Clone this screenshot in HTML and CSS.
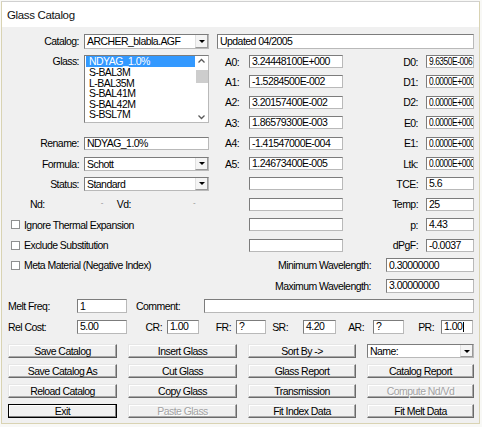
FILE: index.html
```html
<!DOCTYPE html>
<html>
<head>
<meta charset="utf-8">
<title>Glass Catalog</title>
<link rel="stylesheet" href="styles.css">
</head>
<body>
<div class="window">
  <div class="titlebar">Glass Catalog</div>
  <div class="content">
    <div class="main">
      <div class="left">
        <div class="lbl">Catalog:</div>
        <div class="combo tall"><span class="val">ARCHER_blabla.AGF</span><span class="drop"><span class="tri"></span></span></div>

        <div class="lbl glasslbl">Glass:</div>
        <div class="listbox">
          <div class="items">
            <div class="item sel">NDYAG_1.0%</div>
            <div class="item">S-BAL3M</div>
            <div class="item">L-BAL35M</div>
            <div class="item">S-BAL41M</div>
            <div class="item">S-BAL42M</div>
            <div class="item">S-BSL7M</div>
          </div>
          <div class="sb">
            <svg class="arr" width="13" height="10" viewBox="0 0 13 10"><polyline points="3.5,6.5 6.5,3.5 9.5,6.5" fill="none" stroke="#5a5a5a" stroke-width="1.3"/></svg>
            <div class="thumb"></div>
            <div class="track"></div>
            <svg class="arr" width="13" height="10" viewBox="0 0 13 10"><polyline points="3.5,3.5 6.5,6.5 9.5,3.5" fill="none" stroke="#5a5a5a" stroke-width="1.3"/></svg>
          </div>
        </div>

        <div class="lbl">Rename:</div>
        <div class="tb">NDYAG_1.0%</div>

        <div class="lbl">Formula:</div>
        <div class="combo"><span class="val">Schott</span><span class="drop"><span class="tri"></span></span></div>

        <div class="lbl">Status:</div>
        <div class="combo"><span class="val">Standard</span><span class="drop"><span class="tri"></span></span></div>

        <div class="ndrow"><span class="nd1">Nd:</span><span class="dash">-</span><span class="vd1">Vd:</span><span class="dash">-</span></div>

        <div class="cbrow"><span class="cb"></span>Ignore Thermal Expansion</div>
        <div class="cbrow"><span class="cb"></span>Exclude Substitution</div>
        <div class="cbrow"><span class="cb"></span>Meta Material (Negative Index)</div>
      </div>

      <div class="right">
        <div class="tb updated">Updated 04/2005</div>

        <div class="albl">A0:</div><div class="tb">3.24448100E+000</div><div class="dlbl">D0:</div><div class="tb"><span class="sq">9.6350E-006</span></div>
        <div class="albl">A1:</div><div class="tb">-1.5284500E-002</div><div class="dlbl">D1:</div><div class="tb"><span class="sq">0.0000E+000</span></div>
        <div class="albl">A2:</div><div class="tb">3.20157400E-002</div><div class="dlbl">D2:</div><div class="tb"><span class="sq">0.0000E+000</span></div>
        <div class="albl">A3:</div><div class="tb">1.86579300E-003</div><div class="dlbl">E0:</div><div class="tb"><span class="sq">0.0000E+000</span></div>
        <div class="albl">A4:</div><div class="tb">-1.41547000E-004</div><div class="dlbl">E1:</div><div class="tb"><span class="sq">0.0000E+000</span></div>
        <div class="albl">A5:</div><div class="tb">1.24673400E-005</div><div class="dlbl">Ltk:</div><div class="tb"><span class="sq">0.0000E+000</span></div>
        <div></div><div class="tb"></div><div class="dlbl">TCE:</div><div class="tb">5.6</div>
        <div></div><div class="tb"></div><div class="dlbl">Temp:</div><div class="tb">25</div>
        <div></div><div class="tb"></div><div class="dlbl">p:</div><div class="tb">4.43</div>
        <div></div><div class="tb"></div><div class="dlbl">dPgF:</div><div class="tb">-0.0037</div>

        <div class="wrow"><span class="wlbl">Minimum Wavelength:</span><div class="tb wbox">0.30000000</div></div>
        <div class="wrow"><span class="wlbl">Maximum Wavelength:</span><div class="tb wbox">3.00000000</div></div>
      </div>
    </div>

    <div class="frow">
      <span class="flbl">Melt Freq:</span><div class="tb fbox">1</div>
      <span class="comlbl">Comment:</span><div class="tb combox"></div>
    </div>
    <div class="frow">
      <span class="flbl">Rel Cost:</span><div class="tb fbox">5.00</div>
      <span class="rl rl-cr">CR:</span><div class="tb rb rb-cr">1.00</div>
      <span class="rl rl-fr">FR:</span><div class="tb rb rb-fr">?</div>
      <span class="rl rl-sr">SR:</span><div class="tb rb rb-sr">4.20</div>
      <span class="rl rl-ar">AR:</span><div class="tb rb rb-ar">?</div>
      <span class="rl rl-pr">PR:</span><div class="tb rb rb-pr">1.00<span class="caret"></span></div>
    </div>

    <div class="buttons">
      <div class="btn">Save Catalog</div>
      <div class="btn">Insert Glass</div>
      <div class="btn">Sort By -&gt;</div>
      <div class="combo bcombo"><span class="val">Name:</span><span class="drop"><span class="tri"></span></span></div>

      <div class="btn">Save Catalog As</div>
      <div class="btn">Cut Glass</div>
      <div class="btn">Glass Report</div>
      <div class="btn">Catalog Report</div>

      <div class="btn">Reload Catalog</div>
      <div class="btn">Copy Glass</div>
      <div class="btn">Transmission</div>
      <div class="btn disabled">Compute Nd/Vd</div>

      <div class="btn default">Exit</div>
      <div class="btn disabled">Paste Glass</div>
      <div class="btn">Fit Index Data</div>
      <div class="btn">Fit Melt Data</div>
    </div>
  </div>
</div>
</body>
</html>
```

FILE: styles.css
```css
* { box-sizing: border-box; }
html, body { margin: 0; padding: 0; }
body {
  width: 482px;
  height: 427px;
  overflow: hidden;
  background: #f8f8f6;
  font-family: "Liberation Sans", Arial, sans-serif;
  font-size: 10.5px;
  letter-spacing: -0.55px;
  color: #000;
}
.window {
  margin: 1px 0 0 1px;
  width: 479px;
  height: 423px;
  border: 1px solid #d9d3b3;
  border-top-color: #d0d0d0;
  background: #f0f0f0;
  display: flex;
  flex-direction: column;
}
.titlebar {
  height: 25px;
  background: #fff;
  padding-left: 5px;
  display: flex;
  align-items: center;
  font-size: 11.5px;
  letter-spacing: -0.35px;
  color: #111;
}
.content { flex: 1; padding: 4px 0 0 6px; }
.main { display: flex; }
.left {
  display: grid;
  grid-template-columns: 76px 125px;
  grid-auto-rows: 20.4px;
  align-items: center;
}
.right {
  display: grid;
  grid-template-columns: 40px 94px 83px 48px;
  grid-auto-rows: 20.4px;
  align-items: center;
}
.lbl { text-align: right; padding-right: 5px; white-space: nowrap; }
.glasslbl { grid-row: span 4; align-self: start; line-height: 20.4px; }
.albl { padding-left: 16px; }
.dlbl { text-align: right; padding-right: 8px; }

.tb {
  height: 13px;
  background: #fff;
  border: 1px solid #b9b9b9;
  border-top-color: #7c7c7c;
  border-left-color: #7c7c7c;
  padding: 0 2px;
  display: flex;
  align-items: center;
  white-space: nowrap;
  overflow: hidden;
  line-height: 11px;
}
.sq { display: inline-block; flex: none; transform: scaleX(0.8); transform-origin: 0 50%; }
.updated { grid-column: 1 / -1; margin-left: 8px; height: 15px; }

.combo {
  height: 14px;
  background: #fff;
  border: 1px solid #b9b9b9;
  border-top-color: #7c7c7c;
  border-left-color: #7c7c7c;
  display: flex;
  align-items: center;
  white-space: nowrap;
}
.combo.tall { height: 15px; }
.combo .val { flex: 1; padding-left: 2px; overflow: hidden; }
.drop {
  width: 13px;
  height: 100%;
  display: flex;
  align-items: center;
  justify-content: center;
  background: #f4f4f4;
  border-left: 1px solid #e0e0e0;
  border-right: 1px solid #9a9a9a;
  border-bottom: 1px solid #9a9a9a;
}
.tri {
  width: 0;
  height: 0;
  border-left: 3px solid transparent;
  border-right: 3px solid transparent;
  border-top: 3px solid #000;
  margin-top: 1px;
}

.listbox {
  grid-row: span 4;
  align-self: start;
  margin-top: 4px;
  height: 68px;
  background: #fff;
  border: 1px solid #b9b9b9;
  border-top-color: #7c7c7c;
  border-left-color: #7c7c7c;
  display: flex;
}
.items { flex: 1; }
.item { height: 10.6px; line-height: 10.6px; padding-left: 3px; margin-left: 1px; white-space: nowrap; }
.item.sel { background: #3399ff; color: #fff; }
.sb { width: 13px; display: flex; flex-direction: column; align-items: center; }
.arr { display: block; flex: none; }
.thumb { width: 12px; height: 13px; background: #cdcdcd; margin-top: 4px; flex: none; }
.track { flex: 1; }

.ndrow { grid-column: 1 / -1; display: flex; white-space: nowrap; }
.nd1 { margin-left: 22px; width: 75px; }
.dash { width: 17px; color: #8a8a8a; font-size: 8px; }
.vd1 { width: 81px; }

.cbrow { grid-column: 1 / -1; display: flex; align-items: center; padding-left: 3px; white-space: nowrap; }
.cb {
  width: 9px;
  height: 9px;
  background: #fff;
  border: 1px solid #8e8f8f;
  margin-right: 4px;
  flex: none;
}

.wrow { grid-column: 1 / -1; display: flex; justify-content: flex-end; align-items: center; }
.wlbl { margin-right: 15px; white-space: nowrap; }
.wbox { width: 88px; height: 14px; }

.frow { display: flex; align-items: center; height: 20.4px; }
.flbl { width: 69px; white-space: nowrap; }
.fbox { width: 50px; height: 14px; }
.comlbl { width: 68px; margin-left: 9px; }
.combox { width: 270px; height: 14px; }
.rl { text-align: right; white-space: nowrap; }
.rl-cr { width: 40px; padding-right: 5px; }
.rl-fr { width: 37px; padding-right: 5px; }
.rl-sr { width: 37px; padding-right: 15px; }
.rl-ar { width: 37px; padding-right: 9px; }
.rl-pr { width: 37px; padding-right: 7px; }
.rb { height: 14px; }
.rb-cr { width: 32px; }
.rb-fr { width: 30px; }
.rb-sr { width: 33px; }
.rb-ar { width: 31px; }
.rb-pr { width: 32px; }
.caret { display: inline-block; width: 1px; height: 10px; background: #000; margin-left: 1px; }

.buttons {
  margin-top: 7.5px;
  display: grid;
  grid-template-columns: 109px 109px 108px 107px;
  column-gap: 11px;
  row-gap: 6px;
  grid-auto-rows: 14px;
}
.btn {
  display: flex;
  align-items: center;
  justify-content: center;
  background: #f0f0f0;
  border-top: 1px solid #e6e6e6;
  border-left: 1px solid #e6e6e6;
  border-right: 1px solid #6a6a6a;
  border-bottom: 1px solid #6a6a6a;
  box-shadow: inset -1px -1px 0 #a8a8a8, inset 1px 1px 0 #fff;
  white-space: nowrap;
}
.btn.default { border: 1px solid #000; box-shadow: inset -1px -1px 0 #808080, inset 1px 1px 0 #fff; }
.btn.disabled { color: #a3a3a3; text-shadow: 1px 1px 0 #fff; }
.bcombo { height: 14px; }
```
